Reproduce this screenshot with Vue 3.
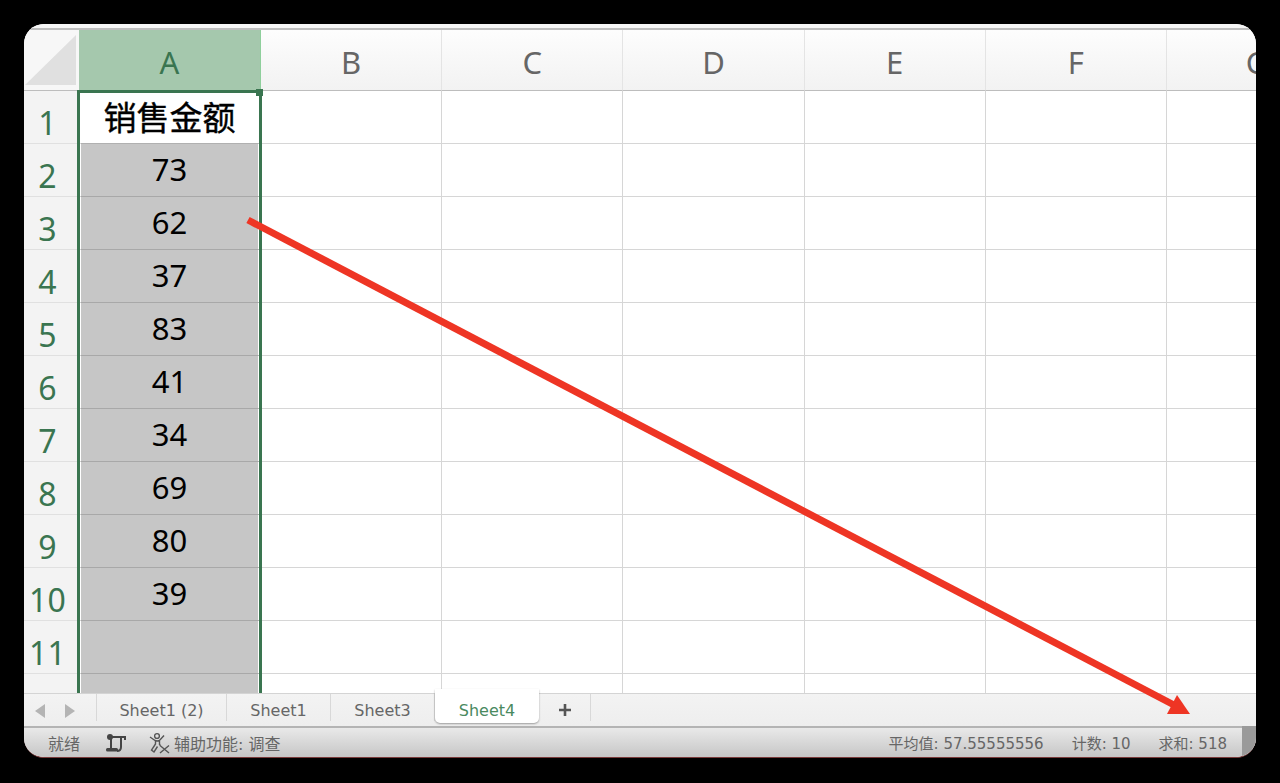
<template>
  <div class="page">
    <div class="window">
      <div class="top-strip"></div>

      <div class="sheet">
        <div class="grid">
          <div class="corner">
            <svg class="corner-mark" width="52" height="51" viewBox="0 0 52 51">
              <path d="M51 0V50H0Z" fill="#e0e0e0" />
            </svg>
          </div>
          <div
            v-for="col in columns"
            :key="col"
            class="col-head"
            :class="{ active: col === 'A' }"
          >
            <span>{{ col }}</span>
          </div>

          <template v-for="(row, r) in rows" :key="r">
            <div class="row-head">{{ r < 11 ? r + 1 : '' }}</div>
            <div class="cell cell-a" :class="{ title: r === 0, picked: r > 0 }">{{ row }}</div>
            <div v-for="c in 6" :key="c" class="cell"></div>
          </template>
        </div>

        <div class="selection">
          <div class="handle"></div>
        </div>
      </div>

      <div class="tabbar">
        <div class="tab-nav">
          <svg width="12" height="14" viewBox="0 0 12 14"><path d="M11 0V14L1 7Z" fill="#b4b4b4" /></svg>
          <svg width="12" height="14" viewBox="0 0 12 14"><path d="M1 0V14L11 7Z" fill="#b4b4b4" /></svg>
        </div>
        <div
          v-for="tab in tabs"
          :key="tab.name"
          class="tab"
          :class="{ current: tab.current }"
          :style="{ width: tab.width + 'px' }"
        >
          {{ tab.name }}
        </div>
        <div class="tab-add">
          <svg width="14" height="14" viewBox="0 0 14 14"><path d="M7 1V13M1 7H13" stroke="#555" stroke-width="2.6" fill="none" /></svg>
        </div>
      </div>

      <div class="statusbar">
        <span class="ready">就绪</span>
        <svg class="macro" width="22" height="22" viewBox="0 0 22 22">
          <circle cx="5" cy="5" r="3" fill="#444" />
          <path d="M6 5H20M20 4V8M6 6V16M16 6V15Q16 19 12 19" stroke="#444" stroke-width="2" fill="none" />
          <rect x="1" y="16" width="12" height="3.5" rx="1.5" fill="#444" />
        </svg>
        <svg class="access" width="22" height="22" viewBox="0 0 22 22">
          <circle cx="8" cy="4" r="2.4" fill="none" stroke="#555" stroke-width="1.4" />
          <path d="M1 5L6 8.5Q8 9.5 10.5 8.5L15 3.5M6.5 9V12L2.5 18L5 20L8.5 14.5M10.5 9V12.5L11.5 13.5" fill="none" stroke="#555" stroke-width="1.4" />
          <path d="M11 13.5L20 21M20 13.5L11 21" fill="none" stroke="#555" stroke-width="1.4" />
        </svg>
        <span class="access-text">辅助功能: 调查</span>
        <span class="stat avg">平均值: 57.55555556</span>
        <span class="stat count">计数: 10</span>
        <span class="stat sum">求和: 518</span>
        <div class="corner-grip"></div>
      </div>
    </div>

    <svg class="arrow" width="1280" height="783" viewBox="0 0 1280 783">
      <path d="M248 220L1174 705" stroke="#ee3524" stroke-width="7" fill="none" />
      <path d="M1190 714H1167L1177 695Z" fill="#ee3524" />
    </svg>
  </div>
</template>

<script setup>
const columns = ['A', 'B', 'C', 'D', 'E', 'F', 'G']
const rows = ['销售金额', 73, 62, 37, 83, 41, 34, 69, 80, 39, '', '']
const tabs = [
  { name: 'Sheet1 (2)', width: 130 },
  { name: 'Sheet1', width: 104 },
  { name: 'Sheet3', width: 104 },
  { name: 'Sheet4', width: 104, current: true }
]
</script>

<style scoped>
.page {
  position: relative;
  width: 1280px;
  height: 783px;
  padding: 24px 24px 25px;
  box-sizing: border-box;
  background: #000;
  font-family: "DejaVu Sans", "Noto Sans CJK SC", sans-serif;
  overflow: hidden;
}

.window {
  display: flex;
  flex-direction: column;
  height: 100%;
  background: #fff;
  border-radius: 20px;
  overflow: hidden;
  border-bottom: 1px solid #7a3a3a;
  box-sizing: border-box;
}

.top-strip {
  flex: none;
  height: 6px;
  box-sizing: border-box;
  background: #f6f6f6;
  border-bottom: 2px solid #bdbdbd;
}

.sheet {
  position: relative;
  flex: 1;
  min-height: 0;
  overflow: hidden;
}

.grid {
  display: grid;
  grid-template-columns: 55.8px repeat(7, 181.2px);
  grid-template-rows: 61px;
  grid-auto-rows: 53px;
  font-family: "Noto Sans", "Noto Sans CJK SC", sans-serif;
}

.corner {
  display: flex;
  align-items: flex-end;
  justify-content: flex-start;
  background: #f7f7f7;
  border-bottom: 1px solid #bdbdbd;
  padding: 0 0 4px 1px;
  box-sizing: border-box;
}

.corner-mark {
  display: block;
}

.col-head {
  display: flex;
  align-items: center;
  justify-content: center;
  padding-top: 4px;
  box-sizing: border-box;
  font-size: 31px;
  color: #666;
  background: linear-gradient(#fdfdfd, #f2f2f2);
  border-right: 1px solid #e4e4e4;
  border-bottom: 1px solid #bdbdbd;
}

.col-head.active {
  margin-left: -1px;
  color: #3a7550;
  background: #a5c8ad;
  border-right-color: #8fcf9c;
}

.row-head {
  display: flex;
  align-items: center;
  justify-content: center;
  padding: 10px 9px 0 0;
  box-sizing: border-box;
  font-size: 32px;
  color: #3a7550;
  background: #f3f3f3;
  border-bottom: 1px solid #e0e0e0;
}

.cell {
  border-right: 1px solid #d6d6d6;
  border-bottom: 1px solid #d6d6d6;
  box-sizing: border-box;
}

.cell-a {
  display: flex;
  align-items: center;
  justify-content: center;
  padding-bottom: 2px;
  font-size: 31px;
  color: #000;
  border-left: 1px solid #fff;
  border-right: 3px solid #fff;
  background-clip: padding-box;
}

.cell-a.title {
  padding-bottom: 3px;
  font-family: "Noto Sans CJK SC", sans-serif;
  font-size: 33px;
  font-weight: 400;
  -webkit-text-stroke: 0.4px #000;
  border-bottom-color: #b0b0b0;
}

.cell-a.picked {
  background-color: #c6c6c6;
  border-bottom-color: #a8a8a8;
}

/* selection frame on top of column A */
.selection {
  position: absolute;
  left: 53px;
  top: 60px;
  width: 185px;
  height: 700px;
  box-sizing: border-box;
  border: 3px solid #3a7550;
}

.handle {
  position: absolute;
  right: -4px;
  top: -4px;
  width: 7px;
  height: 7px;
  background: #3a7550;
}

.tabbar {
  position: relative;
  flex: none;
  display: flex;
  align-items: stretch;
  height: 35px;
  box-sizing: border-box;
  padding-bottom: 5px;
  background: linear-gradient(#f3f3f3, #eeeeee);
  border-top: 1px solid #d4d4d4;
  border-bottom: 2px solid #b4b4b4;
}

.tab-nav {
  display: flex;
  align-items: center;
  gap: 18px;
  width: 73px;
  padding: 6px 0 0 10px;
  box-sizing: border-box;
  border-right: 1px solid #d8d8d8;
}

.tab {
  display: flex;
  align-items: center;
  justify-content: center;
  padding-top: 6px;
  box-sizing: border-box;
  font-size: 16px;
  color: #666;
  border-right: 1px solid #d8d8d8;
}

.tab.current {
  margin-top: -5px;
  margin-bottom: -2px;
  padding-top: 9px;
  color: #4a8a5f;
  background: #fff;
  border-right: none;
  border-radius: 0 0 5px 5px;
  box-shadow: 0 1px 2px rgba(0, 0, 0, 0.35);
}

.tab-add {
  display: flex;
  align-items: center;
  justify-content: center;
  width: 52px;
  padding-top: 5px;
  box-sizing: border-box;
  border-right: 1px solid #d8d8d8;
}

.statusbar {
  position: relative;
  flex: none;
  height: 29px;
  display: flex;
  align-items: center;
  padding-left: 24px;
  font-size: 15px;
  color: #666;
  background: linear-gradient(#e9e9e9, #c6c6c6);
}

.ready,
.access-text {
  font-size: 16px;
}

.macro {
  margin-left: 25px;
}

.access {
  margin-left: 22px;
  margin-right: 3px;
}

.avg {
  margin-left: auto;
}

.count {
  margin-left: 28px;
}

.sum {
  margin-left: 28px;
  margin-right: 29px;
}

.corner-grip {
  position: absolute;
  right: 0;
  top: -2px;
  bottom: 0;
  width: 14px;
  background: #9a9a9a;
}

.arrow {
  position: absolute;
  left: 0;
  top: 0;
  pointer-events: none;
}
</style>
